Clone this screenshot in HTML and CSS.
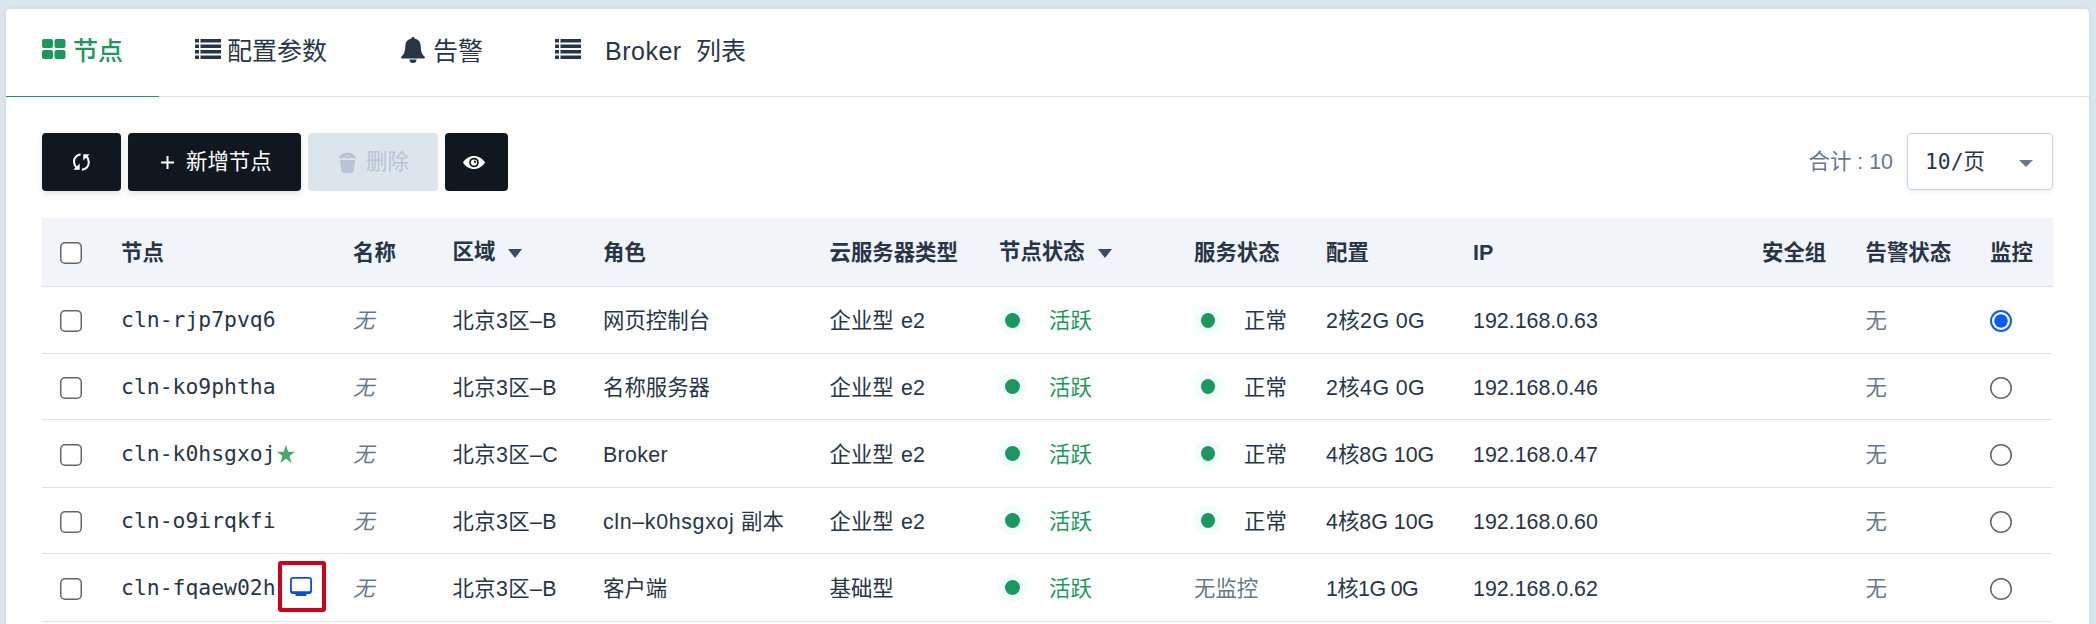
FILE: index.html
```html
<!DOCTYPE html>
<html lang="zh-CN">
<head>
<meta charset="utf-8">
<title>节点</title>
<link rel="stylesheet" href="styles.css">
</head>
<body>
<svg class="defs" width="0" height="0">
  <symbol id="i-list" viewBox="0 0 26 20"><path d="M0 0h4v3.400H0zM5.500 0H26v3.400H5.500zM0 5.500h4v3.400H0zM5.500 5.500H26v3.400H5.500zM0 11h4v3.400H0zM5.500 11H26v3.400H5.500zM0 16.500h4v3.400H0zM5.500 16.500H26v3.400H5.500z"/></symbol>
</svg>
<main class="panel">
  <nav class="tabs">
    <a class="tab tab-nodes active"><svg class="ic-grid" viewBox="0 0 24 20"><rect width="11" height="9" rx="2"/><rect x="12.500" width="11" height="9" rx="2"/><rect y="11" width="11" height="9" rx="2"/><rect x="12.500" y="11" width="11" height="9" rx="2"/></svg><span>节点</span></a>
    <a class="tab tab-config"><svg class="ic-list"><use href="#i-list"/></svg><span>配置参数</span></a>
    <a class="tab tab-alarm"><svg class="ic-bell" viewBox="0 0 24 26"><path d="M12 0c-.9 0-1.500.6-1.500 1.500C6.500 2.300 4.500 5 4.300 9 4.100 14 3.400 17 .6 19.500c-.9.900-.5 2 .6 2h21.600c1.100 0 1.500-1.100.6-2C20.600 17 19.900 14 19.700 9c-.2-4-2.200-6.700-6.200-7.500C13.500.6 12.900 0 12 0zM8.500 22.500a3.500 3.500 0 0 0 7 0z"/></svg><span>告警</span></a>
    <a class="tab tab-broker"><svg class="ic-list"><use href="#i-list"/></svg><span class="broker">Broker</span><span>列表</span></a>
  </nav>
  <section class="toolbar">
    <button class="btn btn-refresh"><svg class="ic-refresh" viewBox="0 0 20 20"><g fill="none" stroke="currentColor" stroke-width="2.300"><path d="M9 1.300C4 2.500 1.500 6 1.700 10c.1 2.600 1.200 4.700 2.800 6.300M10.500 18.600c5-.9 7.600-4.400 7.600-8.300 0-2.800-1-5-2.600-6.600"/></g><path d="M1 18.700h7v-7zM19 1.300h-7v7z"/></svg></button>
    <button class="btn btn-add"><svg class="ic-plus" viewBox="0 0 13 13"><path d="M5.500 0h2v5.500H13v2H7.500V13h-2V7.500H0v-2h5.500z"/></svg><span>新增节点</span></button>
    <button class="btn btn-del" disabled><svg class="ic-trash" viewBox="0 0 17 21"><path d="M0 6.500C0 3.800 3 2 5 1.200 7 .1 10 .1 12 1.200c2 .8 5 2.600 5 5.300H14L8.500 3.300 3 6.500z"/><path d="M5.500 4.500h6v2h-6zM1 8h15l-1.200 10.500c-.1 1.500-1.300 2.500-2.800 2.500H5c-1.500 0-2.700-1-2.800-2.500z"/></svg><span>删除</span></button>
    <button class="btn btn-eye"><svg class="ic-eye" viewBox="0 0 22 13"><path fill-rule="evenodd" d="M0 6.500C2.500 2.500 6.500 0 11 0s8.500 2.500 11 6.500C19.500 10.500 15.500 13 11 13S2.500 10.500 0 6.500zM11 1.700a4.800 4.800 0 1 0 0 9.600 4.800 4.800 0 0 0 0-9.600z"/><circle cx="11" cy="6.500" r="3.100"/><path class="pupil" d="M11 4.500v2.300h2.300A2.300 2.300 0 0 0 11 4.500z"/></svg></button>
    <span class="total">合计 : 10</span>
    <div class="select"><span><b>10/</b>页</span><svg class="caret" viewBox="0 0 14 7"><path d="M0 0h14L7 7z"/></svg></div>
  </section>
  <section class="table">
    <div class="row head">
      <i class="check"></i><span>节点</span><span>名称</span><span class="sort">区域<svg viewBox="0 0 14 9"><path d="M0 0h14L7 9z"/></svg></span><span>角色</span><span>云服务器类型</span><span class="sort">节点状态<svg viewBox="0 0 14 9"><path d="M0 0h14L7 9z"/></svg></span><span>服务状态</span><span>配置</span><span>IP</span><span>安全组</span><span>告警状态</span><span>监控</span>
    </div>
    <div class="row">
      <i class="check"></i><span class="id">cln-rjp7pvq6</span><span class="none">无</span><span class="zone">北京3区–B</span><span>网页控制台</span><span class="kind">企业型 e2</span><span class="state live"><i></i>活跃</span><span class="state"><i></i>正常</span><span class="spec">2核2G 0G</span><span>192.168.0.63</span><span></span><span class="mute">无</span><i class="radio on"></i>
    </div>
    <div class="row">
      <i class="check"></i><span class="id">cln-ko9phtha</span><span class="none">无</span><span class="zone">北京3区–B</span><span>名称服务器</span><span class="kind">企业型 e2</span><span class="state live"><i></i>活跃</span><span class="state"><i></i>正常</span><span class="spec">2核4G 0G</span><span>192.168.0.46</span><span></span><span class="mute">无</span><i class="radio"></i>
    </div>
    <div class="row">
      <i class="check"></i><span class="id">cln-k0hsgxoj<svg class="star" viewBox="0 0 18 18"><path d="M9 0l2.200 6.700H18l-5.500 4.200L14.600 18 9 13.800 3.400 18l2.100-7.100L0 6.700h6.800z"/></svg></span><span class="none">无</span><span class="zone">北京3区–C</span><span class="latin">Broker</span><span class="kind">企业型 e2</span><span class="state live"><i></i>活跃</span><span class="state"><i></i>正常</span><span>4核8G 10G</span><span>192.168.0.47</span><span></span><span class="mute">无</span><i class="radio"></i>
    </div>
    <div class="row">
      <i class="check"></i><span class="id">cln-o9irqkfi</span><span class="none">无</span><span class="zone">北京3区–B</span><span><span class="replica">cln–k0hsgxoj </span>副本</span><span class="kind">企业型 e2</span><span class="state live"><i></i>活跃</span><span class="state"><i></i>正常</span><span>4核8G 10G</span><span>192.168.0.60</span><span></span><span class="mute">无</span><i class="radio"></i>
    </div>
    <div class="row">
      <i class="check"></i><span class="id">cln-fqaew02h<em class="mark"><svg viewBox="0 0 22 19"><path fill-rule="evenodd" d="M3 0h16a3 3 0 0 1 3 3v11a3 3 0 0 1-3 3h-2.500v2h-11v-2H3a3 3 0 0 1-3-3V3a3 3 0 0 1 3-3zm-.2 1.700a1 1 0 0 0-1 1v10.500a1 1 0 0 0 1 1h16.400a1 1 0 0 0 1-1V2.700a1 1 0 0 0-1-1z"/></svg></em></span><span class="none">无</span><span class="zone">北京3区–B</span><span>客户端</span><span>基础型</span><span class="state live"><i></i>活跃</span><span class="mute">无监控</span><span class="spec-tight">1核1G 0G</span><span>192.168.0.62</span><span></span><span class="mute">无</span><i class="radio"></i>
    </div>
  </section>
</main>
</body>
</html>
```
FILE: styles.css
```css
* { box-sizing: border-box; }
body {
  margin: 0;
  height: 624px;
  overflow: hidden;
  padding: 9px 7px 0 6px;
  background: #dce4ec;
  color: #283547;
  font: 21.4px/30px "Liberation Sans", "Noto Sans CJK SC", sans-serif;
}
svg { display: block; flex: none; fill: currentColor; }
.defs { position: absolute; }
.panel {
  height: 640px;
  background: #fff;
  border-radius: 4px 4px 0 0;
  box-shadow: 0 0 4px rgba(40, 60, 90, .08);
}

.tabs {
  display: flex;
  height: 88px;
  border-bottom: 1px solid #dbe4eb;
}
.tab {
  display: flex;
  height: 88px;
  padding: 0 36px;
  font-size: 25px;
  line-height: 85px;
  white-space: nowrap;
}
.tab svg { margin-top: 30px; }
.tab-nodes { width: 153px; }
.tab-config { width: 206px; }
.tab-alarm { width: 154px; }
.tab.active {
  color: #1c985f;
  font-weight: 500;
  border-bottom: 1px solid #1c985f;
}
.ic-grid { width: 24px; height: 20px; margin-right: 7px; }
.ic-list { width: 26px; height: 20px; margin-right: 6px; }
.tab .ic-bell { width: 24px; height: 26px; margin: 28px 8px 0 0; }
.tab-broker .ic-list { margin-right: 24px; }
.broker { width: 91px; letter-spacing: .5px; }

.toolbar {
  display: flex;
  align-items: flex-start;
  gap: 7px;
  height: 121px;
  padding: 36px 36px 0;
}
.btn {
  display: flex;
  align-items: center;
  height: 58px;
  padding: 0;
  border: 0;
  border-radius: 4px;
  background: #10171e;
  color: #fff;
  font: inherit;
  font-weight: 400;
  box-shadow: 0 3px 6px rgba(30, 40, 70, .13);
}
.btn-refresh { width: 79px; justify-content: center; }
.btn-add { width: 173px; padding-left: 33px; }
.btn-del { width: 130px; padding-left: 31px; background: #dce4ec; color: #b7c5d2; box-shadow: none; }
.btn-eye { width: 63px; padding-left: 18px; box-shadow: none; }
.ic-refresh { width: 19px; height: 18px; }
.ic-plus { width: 13px; height: 13px; margin-right: 12px; }
.ic-trash { width: 17px; height: 21px; margin-right: 10px; }
.ic-eye { width: 22px; height: 13px; }
.pupil { fill: #10171e; }
.total {
  margin: 14px 7px 0 auto;
  color: #66788a;
}
.select {
  display: flex;
  align-items: center;
  justify-content: space-between;
  width: 146px;
  height: 57px;
  padding: 1px 19px 0 17px;
  border: 1px solid #c6d3df;
  border-radius: 4px;
  box-shadow: 0 2px 4px rgba(30, 50, 80, .07);
}
.select b { font: 21.3px "DejaVu Sans Mono", monospace; }
.caret { width: 14px; height: 7px; margin-top: 3px; color: #66788a; }

.table { margin: 0 36px; }
.row {
  display: grid;
  grid-template-columns: 79px 232px 99.5px 150.5px 226.5px 169.5px 195px 132px 147px 289px 103.5px 124.5px 63px;
  align-items: center;
  height: 66px;
  border-bottom: 1px solid #dbe4eb;
  white-space: nowrap;
}
.row:nth-child(even) { height: 68px; }
.row:nth-child(2) { height: 67px; }
.row > span { padding-top: 2px; }
.row.head {
  height: 69px;
  background: #f1f4f9;
  font-weight: 700;
}
.row.head > span { padding: 1px 0 0; }
.row.head > .sort { padding: 0 0 1px; }
.check {
  width: 22px;
  height: 22px;
  margin: 2px 0 0 18px;
  box-shadow: inset 0 0 0 1.500px #666;
  border-radius: 5px;
  background: #fff;
}
.sort { display: flex; align-items: center; }
.sort svg { width: 14px; height: 9px; margin: 4px 0 0 13px; color: #3b4a5c; }
.row > .id {
  display: flex;
  align-items: center;
  padding-top: 0;
  font-family: "DejaVu Sans Mono", monospace;
  font-size: 21.4px;
}
.star { width: 18px; height: 18px; margin-left: 1px; color: #4aa76e; }
.mark {
  display: grid;
  place-items: center;
  width: 48px;
  height: 51px;
  margin: -3px 0 -1px 2px;
  border: 4px solid #d0021b;
  border-radius: 3px;
}
.mark svg { width: 22px; height: 19px; margin-left: -2px; color: #0b50d0; }
.none { font-style: italic; color: #66788a; }
.mute { color: #66788a; }
.latin { letter-spacing: .3px; }
.zone { letter-spacing: .35px; }
.kind { word-spacing: 1.500px; }
.spec { letter-spacing: .4px; }
.spec-tight { letter-spacing: -.6px; }
.replica { letter-spacing: .65px; }
.state { display: flex; align-items: center; }
.state i {
  width: 14px;
  height: 15px;
  margin: 0 29px 2px 7px;
  border-radius: 50%;
  background: #1c985f;
  box-shadow: 0 0 0 7px #f1fefb;
}
.state.live i { width: 15px; margin-left: 6px; }
.live { color: #1c985f; }
.radio {
  width: 22px;
  height: 22px;
  margin-top: 2px;
  box-shadow: inset 0 0 0 1.500px #666;
  border-radius: 50%;
}
.radio.on {
  box-shadow: inset 0 0 0 2px #0b5cff;
  background: radial-gradient(circle, #0b5cff 6.300px, #fff 7px);
}
```
